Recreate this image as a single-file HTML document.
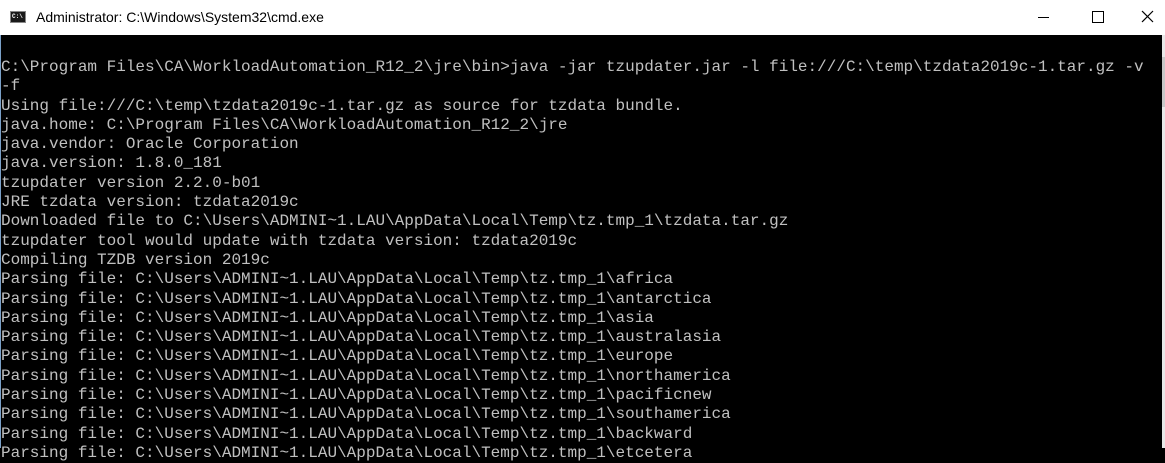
<!DOCTYPE html>
<html><head><meta charset="utf-8"><style>
html,body{margin:0;padding:0;width:1165px;height:448px;overflow:hidden;background:#000;}
#title{position:absolute;left:0;top:0;width:1165px;height:35px;background:#fff;}
#title .t{position:absolute;left:36px;top:9px;font:14px "Liberation Sans",sans-serif;color:#000;}
#icon{position:absolute;left:10px;top:11px;width:16px;height:12px;background:#1a1a1a;border:1px solid #888;box-sizing:border-box;}
#icon span{position:absolute;left:1px;top:1px;font:bold 6px "Liberation Mono",monospace;color:#fff;}
.ctl{position:absolute;top:0;height:34px;}
#min{left:1038px;top:17px;width:11px;height:1px;background:#000;}
#max{left:1092px;top:11px;width:10px;height:10px;border:1px solid #000;}
#left{position:absolute;left:0;top:35px;width:1px;height:413px;background:#7aa0c8;}
#scroll{position:absolute;left:1162px;top:35px;width:3px;height:413px;background:#e8e8e8;}
#scroll i{position:absolute;left:0;top:22px;width:3px;height:50px;background:#c8c8c8;}
#con{position:absolute;left:1px;top:58px;font:16px/19.3px "Liberation Mono",monospace;color:#c0c0c0;white-space:pre;}
</style></head><body>
<div id="title"><div id="icon"><span>C:\</span></div><div class="t">Administrator: C:\Windows\System32\cmd.exe</div>
<div class="ctl" id="min"></div><div class="ctl" id="max"></div>
<svg style="position:absolute;left:1141px;top:10px" width="13" height="13"><path d="M1 1L12 12M12 1L1 12" stroke="#000" stroke-width="1.2"/></svg>
</div>
<div id="left"></div>
<div id="scroll"><i></i></div>
<div id="con">C:\Program Files\CA\WorkloadAutomation_R12_2\jre\bin&gt;java -jar tzupdater.jar -l file:///C:\temp\tzdata2019c-1.tar.gz -v
-f
Using file:///C:\temp\tzdata2019c-1.tar.gz as source for tzdata bundle.
java.home: C:\Program Files\CA\WorkloadAutomation_R12_2\jre
java.vendor: Oracle Corporation
java.version: 1.8.0_181
tzupdater version 2.2.0-b01
JRE tzdata version: tzdata2019c
Downloaded file to C:\Users\ADMINI~1.LAU\AppData\Local\Temp\tz.tmp_1\tzdata.tar.gz
tzupdater tool would update with tzdata version: tzdata2019c
Compiling TZDB version 2019c
Parsing file: C:\Users\ADMINI~1.LAU\AppData\Local\Temp\tz.tmp_1\africa
Parsing file: C:\Users\ADMINI~1.LAU\AppData\Local\Temp\tz.tmp_1\antarctica
Parsing file: C:\Users\ADMINI~1.LAU\AppData\Local\Temp\tz.tmp_1\asia
Parsing file: C:\Users\ADMINI~1.LAU\AppData\Local\Temp\tz.tmp_1\australasia
Parsing file: C:\Users\ADMINI~1.LAU\AppData\Local\Temp\tz.tmp_1\europe
Parsing file: C:\Users\ADMINI~1.LAU\AppData\Local\Temp\tz.tmp_1\northamerica
Parsing file: C:\Users\ADMINI~1.LAU\AppData\Local\Temp\tz.tmp_1\pacificnew
Parsing file: C:\Users\ADMINI~1.LAU\AppData\Local\Temp\tz.tmp_1\southamerica
Parsing file: C:\Users\ADMINI~1.LAU\AppData\Local\Temp\tz.tmp_1\backward
Parsing file: C:\Users\ADMINI~1.LAU\AppData\Local\Temp\tz.tmp_1\etcetera</div>
</body></html>
